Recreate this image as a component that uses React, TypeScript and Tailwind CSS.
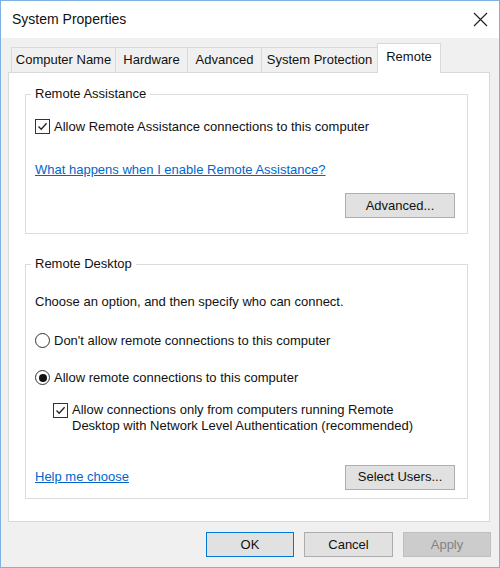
import React from "react";

const font = { fontFamily: '"Liberation Sans", Arial, sans-serif' };

function CheckBox() {
  return (
    <span className="w-[15px] h-[15px] border border-[#333] bg-white flex items-center justify-center shrink-0">
      <svg width="11" height="11" viewBox="0 0 11 11">
        <path d="M1.5 5.5 L4.2 8.3 L9.6 2.2" fill="none" stroke="#222" strokeWidth="1.3" />
      </svg>
    </span>
  );
}

function Radio({ on }: { on?: boolean }) {
  return (
    <span className="w-[15px] h-[15px] rounded-full border border-[#333] bg-white flex items-center justify-center shrink-0">
      {on && <span className="w-[8px] h-[8px] rounded-full bg-[#111]" />}
    </span>
  );
}

function Button({ children, className = "" }: { children: React.ReactNode; className?: string }) {
  return (
    <div
      className={`h-[25px] flex items-center justify-center border text-[#111] ${className}`}
    >
      {children}
    </div>
  );
}

const tabs = ["Computer Name", "Hardware", "Advanced", "System Protection"];
const tabWidths = ["w-[105px]", "w-[73px]", "w-[75px]", "w-[117px]"];

export default function App() {
  return (
    <div
      className="w-[500px] h-[568px] bg-[#f0f0f0] border border-[#7fb2e2] flex flex-col text-[13px] text-[#111]"
      style={font}
    >
      <div className="h-[37px] bg-white flex items-center justify-between pl-[11px] pr-[11px] shrink-0">
        <span className="text-[14px]">System Properties</span>
        <svg width="15" height="15" viewBox="0 0 15 15">
          <path d="M1 1 L14 14 M14 1 L1 14" stroke="#222" strokeWidth="1.2" />
        </svg>
      </div>

      <div className="flex items-end pl-[10px] h-[33px] mt-[1px]">
        {tabs.map((t, i) => (
          <div
            key={t}
            className={`${tabWidths[i]} h-[25px] border border-b-0 border-[#d9d9d9] -ml-px first:ml-0 flex items-center justify-center bg-[#f0f0f0]`}
          >
            {t}
          </div>
        ))}
        <div className="w-[64px] h-[30px] -ml-px bg-white border border-b-0 border-[#d9d9d9] flex items-start justify-center pt-[3px] relative top-px z-10">
          Remote
        </div>
      </div>

      <div className="ml-[7px] w-[482px] h-[450px] bg-white border border-[#d9d9d9] pl-[16px] pt-[13px]">
        <fieldset className="w-[443px] h-[148px] border border-[#dcdcdc] px-[9px]">
          <legend className="-ml-[4px] px-[4px] leading-[16px]">Remote Assistance</legend>
          <div className="flex items-center gap-[4px] mt-[15px]">
            <CheckBox />
            <span>Allow Remote Assistance connections to this computer</span>
          </div>
          <div className="mt-[23px] text-[#0066cc] underline">What happens when I enable Remote Assistance?</div>
          <div className="flex justify-end mt-[14px] pr-[3px]">
            <Button className="w-[110px] bg-[#e1e1e1] border-[#adadad]">Advanced...</Button>
          </div>
        </fieldset>

        <fieldset className="w-[443px] h-[243px] border border-[#dcdcdc] px-[9px] mt-[22px]">
          <legend className="-ml-[4px] px-[4px] leading-[16px]">Remote Desktop</legend>
          <div className="mt-[20px]">Choose an option, and then specify who can connect.</div>
          <div className="flex items-center gap-[4px] mt-[19px]">
            <Radio />
            <span>Don't allow remote connections to this computer</span>
          </div>
          <div className="flex items-center gap-[4px] mt-[18px]">
            <Radio on />
            <span>Allow remote connections to this computer</span>
          </div>
          <div className="flex items-start gap-[4px] mt-[14px] ml-[18px]">
            <span className="mt-[1px]"><CheckBox /></span>
            <span className="leading-[16px]">
              Allow connections only from computers running Remote
              <br />
              Desktop with Network Level Authentication (recommended)
            </span>
          </div>
          <div className="flex items-center justify-between mt-[31px] pr-[3px]">
            <span className="text-[#0066cc] underline">Help me choose</span>
            <Button className="w-[110px] bg-[#e1e1e1] border-[#adadad]">Select Users...</Button>
          </div>
        </fieldset>
      </div>

      <div className="flex justify-end gap-[10px] pr-[8px] mt-[10px]">
        <Button className="w-[88px] bg-[#e1e1e1] border-[#0078d7]">OK</Button>
        <Button className="w-[89px] bg-[#e1e1e1] border-[#adadad]">Cancel</Button>
        <Button className="w-[88px] bg-[#cccccc] border-[#bfbfbf] !text-[#838383]">Apply</Button>
      </div>
    </div>
  );
}
